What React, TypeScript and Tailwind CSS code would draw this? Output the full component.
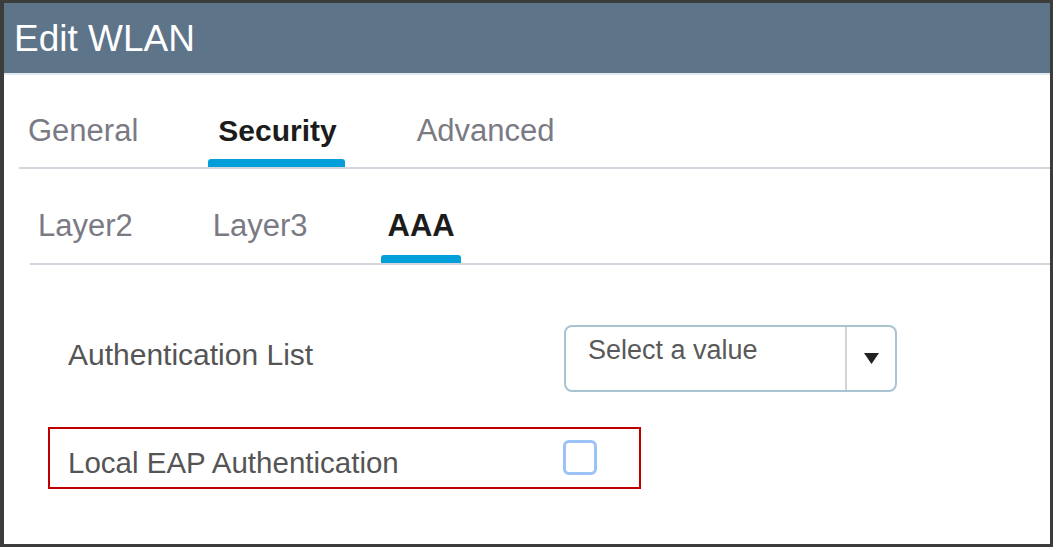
import React from "react";

export default function App() {
  return (
    <div className="w-[1053px] h-[547px] bg-white border-solid border-[#3c3c3c] border-t-[3px] border-l-[4px] border-r-[3px] border-b-[3px] flex flex-col font-['Liberation_Sans',Arial,sans-serif] overflow-hidden">
      <div className="h-[70px] bg-[#5d7489] pl-[10px] flex items-center text-white text-[37px] leading-none shrink-0">
        Edit WLAN
      </div>
      <div className="h-[2px] bg-[#e3eaf0] shrink-0" />

      {/* main tabs */}
      <div className="ml-[15px] mt-[36px] flex gap-[80px] pl-[9px] border-b-2 border-[#d5d5dd]">
        <div className="relative pt-[2px] pb-[18px] leading-[36px] text-[31px] text-[#7a7a84]">General</div>
        <div className="relative pt-[2px] pb-[18px] leading-[36px] text-[30px] font-bold text-[#1c1c1c]">
          Security
          <div className="absolute bottom-0 left-[-10px] right-[-8px] h-[8px] bg-[#049fd9] rounded-t-[3px]" />
        </div>
        <div className="relative pt-[2px] pb-[18px] leading-[36px] text-[31px] text-[#7a7a84]">Advanced</div>
      </div>

      {/* sub tabs */}
      <div className="ml-[26px] mt-[36px] flex gap-[80px] pl-[8px] border-b-2 border-[#d5d5dd]">
        <div className="relative pt-[3px] pb-[19px] leading-[36px] text-[31px] text-[#7a7a84]">Layer2</div>
        <div className="relative pt-[3px] pb-[19px] leading-[36px] text-[31px] text-[#7a7a84]">Layer3</div>
        <div className="relative pt-[3px] pb-[19px] leading-[36px] text-[31px] font-bold text-[#1c1c1c]">
          AAA
          <div className="absolute bottom-0 left-[-7px] right-[-6px] h-[8px] bg-[#049fd9] rounded-t-[3px]" />
        </div>
      </div>

      {/* form */}
      <div className="flex flex-col">
        <div className="mt-[60px] ml-[64px] flex items-start">
          <div className="w-[496px] pt-[13px] leading-[34px] text-[30px] text-[#555555]">
            Authentication List
          </div>
          <div className="w-[333px] h-[67px] border-2 border-[#a9c3d2] rounded-[8px] flex">
            <div className="flex-1 pl-[22px] pt-[8px] text-[27px] leading-[30px] text-[#595959]">
              Select a value
            </div>
            <div className="w-[50px] border-l-2 border-[#d0d4d7] flex items-center justify-center">
              <svg width="15" height="11" viewBox="0 0 15 11">
                <polygon points="0,0 15,0 7.5,11" fill="#222222" />
              </svg>
            </div>
          </div>
        </div>

        <div className="mt-[35px] ml-[44px] w-[593px] h-[62px] border-2 border-[#c00000] flex items-start pl-[18px]">
          <div className="w-[495px] pt-[17px] leading-[34px] text-[29.5px] text-[#555555]">
            Local EAP Authentication
          </div>
          <div className="mt-[11px] w-[34px] h-[35px] border-[3px] border-[#9cc2f8] rounded-[6px] bg-white" />
        </div>
      </div>
    </div>
  );
}
